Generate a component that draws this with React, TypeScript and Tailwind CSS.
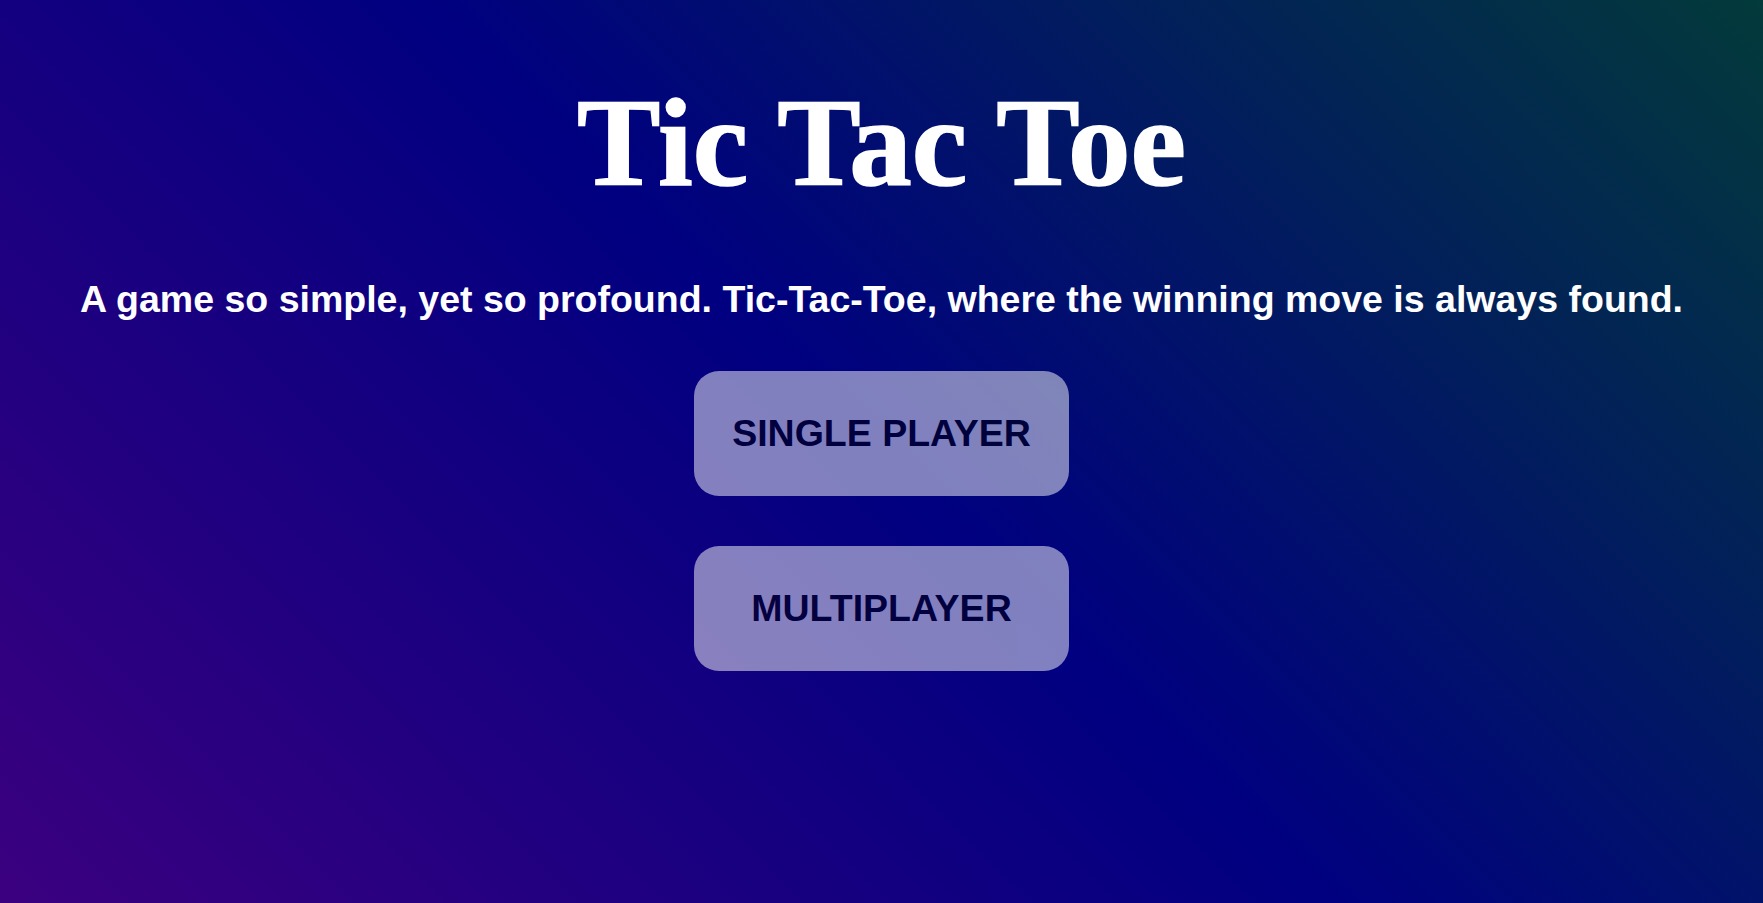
import React from "react";

export default function App() {
  return (
    <div className="w-full h-[903px] overflow-hidden bg-[linear-gradient(45deg,#3b0080,#000080_50%,#033a3a)] flex flex-col items-center text-white">
      <h1 className="mt-[73px] font-['Liberation_Serif',serif] font-bold text-[125px] leading-[140px] [-webkit-text-stroke:1.5px_white]">Tic Tac Toe</h1>
      <p className="mt-[64px] font-['Liberation_Sans',Arial,sans-serif] font-bold text-[37.5px] leading-[44px]">
        A game so simple, yet so profound. Tic-Tac-Toe, where the winning move is always found.
      </p>
      <div className="mt-[50px] flex flex-col gap-[50px]">
        <button className="w-[375px] h-[125px] rounded-[25px] bg-white opacity-50 text-black font-['Liberation_Sans',Arial,sans-serif] font-bold text-[37.5px]">
          SINGLE PLAYER
        </button>
        <button className="w-[375px] h-[125px] rounded-[25px] bg-white opacity-50 text-black font-['Liberation_Sans',Arial,sans-serif] font-bold text-[37.5px]">
          MULTIPLAYER
        </button>
      </div>
    </div>
  );
}
